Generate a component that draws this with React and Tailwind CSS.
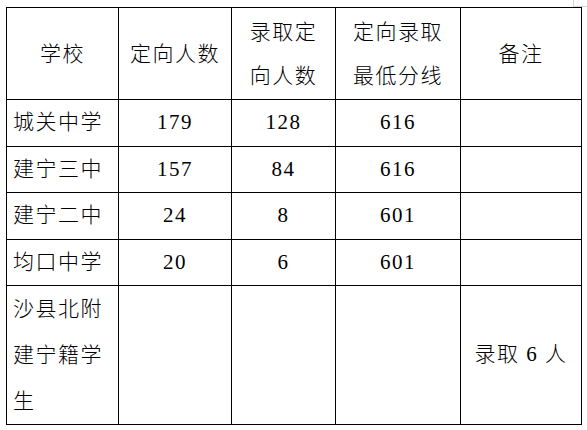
const rows = [
  { school: '城关中学', plan: '179', admit: '128', score: '616', h: 'h-[47px]' },
  { school: '建宁三中', plan: '157', admit: '84', score: '616', h: 'h-[46px]' },
  { school: '建宁二中', plan: '24', admit: '8', score: '601', h: 'h-[47px]' },
  { school: '均口中学', plan: '20', admit: '6', score: '601', h: 'h-[46px]' },
]

const cell = 'border border-black align-middle text-center p-0'

export default function App() {
  return (
    <div className="relative w-[587px] h-[430px] bg-white text-black overflow-hidden">
      {/* page corner mark */}
      <div className="absolute top-0 left-[573px] w-[14px] h-[7px] border-l border-b border-gray-300" />

      <table className="relative ml-[6px] mt-[7px] w-[575px] table-fixed border-collapse text-[21px] font-light tracking-[1.5px] font-['Liberation_Serif','Times_New_Roman','Noto_Sans_CJK_SC',serif]">
        <colgroup>
          <col className="w-[112px]" />
          <col className="w-[113px]" />
          <col className="w-[104px]" />
          <col className="w-[125px]" />
          <col className="w-[121px]" />
        </colgroup>
        <tbody>
          <tr className="h-[92px] leading-[44px]">
            <td className={cell}>学校</td>
            <td className={cell}>定向人数</td>
            <td className={cell}>录取定<br />向人数</td>
            <td className={cell}>定向录取<br />最低分线</td>
            <td className={cell}>备注</td>
          </tr>
          {rows.map(r => (
            <tr key={r.school} className={r.h}>
              <td className={`${cell} !text-left pl-[6px]`}>{r.school}</td>
              <td className={cell}>{r.plan}</td>
              <td className={cell}>{r.admit}</td>
              <td className={cell}>{r.score}</td>
              <td className={cell}></td>
            </tr>
          ))}
          <tr className="h-[139px]">
            <td className="border border-black align-top text-left pl-[6px] leading-[46px]">
              沙县北附<br />建宁籍学<br />生
            </td>
            <td className={cell}></td>
            <td className={cell}></td>
            <td className={cell}></td>
            <td className={cell}>录取 6 人</td>
          </tr>
        </tbody>
      </table>
    </div>
  )
}
